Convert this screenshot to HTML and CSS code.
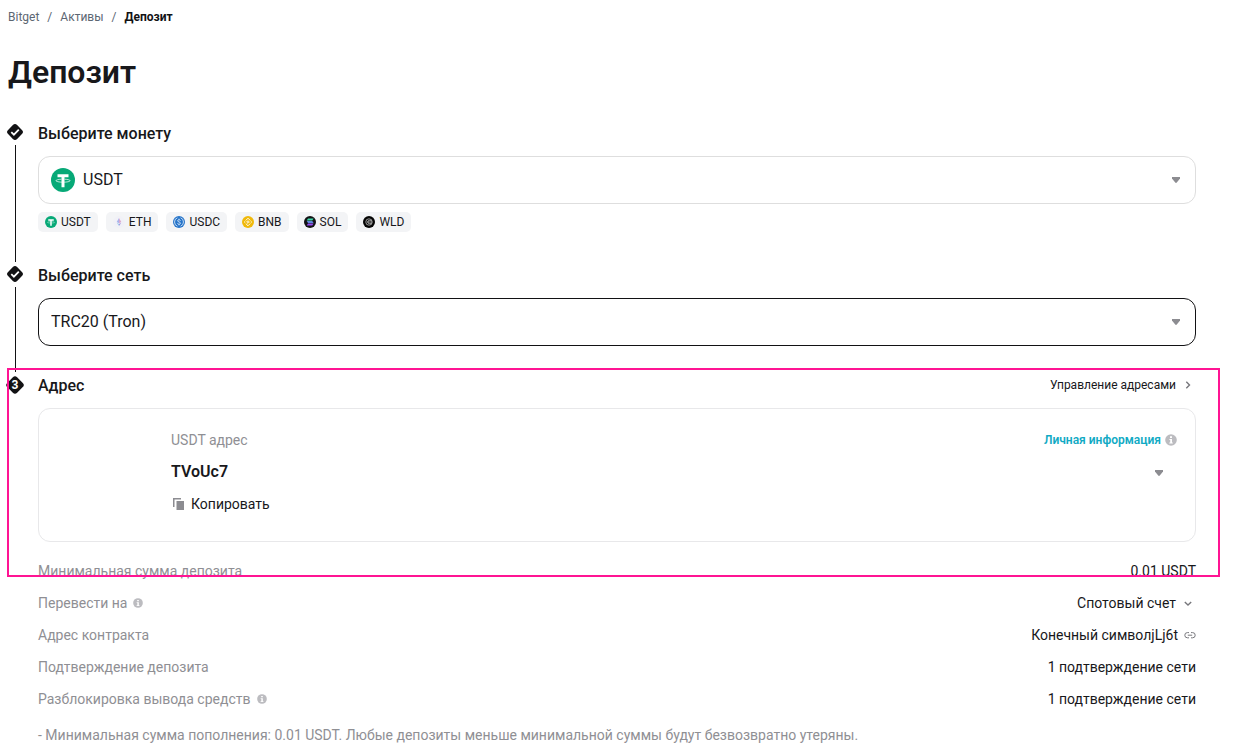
FILE: index.html
```
<!DOCTYPE html>
<html lang="ru">

<head>
    <meta charset="UTF-8">
    <meta name="viewport" content="width=device-width, initial-scale=1.0">
    <title>Депозит</title>
    <link rel="stylesheet" href="styles.css">
</head>

<body>
    <!-- shared icons -->
    <svg class="sprite" aria-hidden="true">
        <symbol id="done" viewBox="0 0 18 18">
            <rect x="2.6" y="2.6" width="12.8" height="12.8" rx="3" transform="rotate(45 9 9)" fill="#121214" />
            <path d="M5.3 9.2l2.6 2.5 4.9-5" fill="none" stroke="#fff" stroke-width="1.8" />
        </symbol>
        <symbol id="info" viewBox="0 0 12 12">
            <circle cx="6" cy="6" r="5.8" fill="#bcbcc0" />
            <path d="M5 2.3h2v1.6H5zM4.4 5H7v3.6h.8v1H4.3v-1h.9V6h-.8z" fill="#fff" />
        </symbol>
        <symbol id="caret" viewBox="0 0 8 6">
            <path d="M0 0h8v1.500L4.800 5.500q-.8.8-1.600 0L0 1.500z" />
        </symbol>
        <symbol id="usdt" viewBox="0 0 24 24">
            <circle cx="12" cy="12" r="12" fill="#07a977" />
            <path d="M6.500 6.300h11v3h-4v10h-3v-10h-4z" fill="#fff" />
            <path d="M10.500 11.200c-3.300.2-5.600.8-5.600 1.500s3.200 1.500 7.100 1.500 7.100-.7 7.100-1.500-2.300-1.300-5.600-1.500" fill="none" stroke="#fff" stroke-width=".7" />
        </symbol>
    </svg>

    <main class="page">
        <nav class="breadcrumb">
            <a href="#">Bitget</a>
            <span>/</span>
            <a href="#">Активы</a>
            <span>/</span>
            <b>Депозит</b>
        </nav>

        <h1>Депозит</h1>

        <!-- coin -->
        <section class="step step-coin">
            <div class="marker">
                <svg class="marker-icon"><use href="#done" /></svg>
                <div class="line"></div>
            </div>
            <div class="step-body">
                <div class="step-head">
                    <h2><label for="coin">Выберите монету</label></h2>
                </div>
                <div class="field">
                    <svg class="coin-icon"><use href="#usdt" /></svg>
                    <select id="coin" class="with-icon">
                        <option>USDT</option>
                        <option>ETH</option>
                        <option>USDC</option>
                    </select>
                    <svg class="caret"><use href="#caret" /></svg>
                </div>
                <div class="chips">
                    <button type="button"><svg viewBox="0 0 24 24"><use href="#usdt" /></svg>USDT</button>
                    <button type="button">
                        <svg viewBox="0 0 12 12">
                            <circle cx="6" cy="6" r="6" fill="#f1f1f7" />
                            <path d="M6 2L3.700 6 6 7.300z" fill="#a9b4ec" />
                            <path d="M6 2l2.300 4L6 7.300z" fill="#dba9cf" />
                            <path d="M3.800 6.800L6 10V8z" fill="#9fcbe8" />
                            <path d="M8.200 6.800L6 10V8z" fill="#9d93e0" />
                        </svg>ETH
                    </button>
                    <button type="button">
                        <svg viewBox="0 0 12 12">
                            <circle cx="6" cy="6" r="6" fill="#2775ca" />
                            <path d="M4.400 1.800a4.500 4.500 0 0 0 0 8.400M7.600 1.800a4.500 4.500 0 0 1 0 8.400M7.500 4.700C7.300 3.400 4.600 3.400 4.600 4.800S7.500 5.700 7.500 7.200 4.600 8.600 4.500 7.300M6 2.700v1M6 8.300v1" fill="none" stroke="#fff" stroke-width=".7" />
                        </svg>USDC
                    </button>
                    <button type="button">
                        <svg viewBox="0 0 12 12">
                            <circle cx="6" cy="6" r="6" fill="#f0b90b" />
                            <path d="M3.700 4.500L6 2.200l2.300 2.300M3.700 7.500L6 9.800l2.300-2.300M6 4.700L7.300 6 6 7.300 4.700 6z" fill="none" stroke="#fff" stroke-width=".9" />
                            <path d="M2.700 5.200l.8.8-.8.8-.8-.8zM9.300 5.200l.8.8-.8.8-.8-.8z" fill="#fff" />
                        </svg>BNB
                    </button>
                    <button type="button">
                        <svg viewBox="0 0 12 12">
                            <circle cx="6" cy="6" r="6" fill="#121214" />
                            <path d="M4 2.600h5.600L8.300 4.400H2.700z" fill="#3fd6a8" />
                            <path d="M2.700 5.100h5.600l1.300 1.800H4z" fill="#5f86dc" />
                            <path d="M4 7.600h5.600L8.300 9.400H2.700z" fill="#9a4cf5" />
                        </svg>SOL
                    </button>
                    <button type="button">
                        <svg viewBox="0 0 12 12">
                            <circle cx="6" cy="6" r="6" fill="#050505" />
                            <path d="M9.200 6A3.200 3.200 0 1 1 6 2.800 3.200 3.200 0 0 1 9.200 6M4.500 6h4.600M8.500 4.400H6.300a1.600 1.600 0 0 0 0 3.200h2.200" fill="none" stroke="#d5d5d5" stroke-width=".7" />
                        </svg>WLD
                    </button>
                </div>
            </div>
        </section>

        <!-- network -->
        <section class="step step-network">
            <div class="marker">
                <svg class="marker-icon"><use href="#done" /></svg>
                <div class="line"></div>
            </div>
            <div class="step-body">
                <div class="step-head">
                    <h2><label for="network">Выберите сеть</label></h2>
                </div>
                <div class="field active">
                    <select id="network">
                        <option>TRC20 (Tron)</option>
                    </select>
                    <svg class="caret"><use href="#caret" /></svg>
                </div>
            </div>
        </section>

        <!-- address -->
        <section class="step step-address">
            <div class="marker">
                <div class="number"><span>3</span></div>
            </div>
            <div class="step-body">
                <div class="step-head">
                    <h2><label for="address">Адрес</label></h2>
                    <a href="#" class="manage">Управление адресами
                        <svg viewBox="0 0 12 12"><path d="M4.300 2.800L7.500 6 4.300 9.200" /></svg>
                    </a>
                </div>
                <div class="card">
                    <div class="card-row">
                        <span class="muted">USDT адрес</span>
                        <a href="#" class="personal">Личная информация <svg><use href="#info" /></svg></a>
                    </div>
                    <div class="address">
                        <select id="address">
                            <option>TVoUc7</option>
                        </select>
                        <svg class="caret"><use href="#caret" /></svg>
                    </div>
                    <button type="button" class="copy">
                        <svg viewBox="0 0 12 12">
                            <path d="M0 0h8v1.500H1.500V9H0z" />
                            <path d="M3.500 3H11v9H3.500z" />
                        </svg>Копировать
                    </button>
                </div>
            </div>
            <div class="highlight"></div>
        </section>

        <!-- details -->
        <dl class="details">
            <div>
                <dt>Минимальная сумма депозита</dt>
                <dd>0.01 USDT</dd>
            </div>
            <div>
                <dt>Перевести на <svg class="info"><use href="#info" /></svg></dt>
                <dd>
                    <button type="button" class="account">Спотовый счет
                        <svg viewBox="0 0 12 12"><path d="M2.800 5L6 8l3.200-3" /></svg>
                    </button>
                </dd>
            </div>
            <div>
                <dt>Адрес контракта</dt>
                <dd>
                    <a href="#" class="contract">Конечный символjLj6t
                        <svg viewBox="0 0 12 12"><path d="M5 3.600H3.400a2.600 2.600 0 0 0 0 5.200H5M7 3.600h1.600a2.600 2.600 0 0 1 0 5.200H7M3.800 6.200h4.400" /></svg>
                    </a>
                </dd>
            </div>
            <div>
                <dt>Подтверждение депозита</dt>
                <dd>1 подтверждение сети</dd>
            </div>
            <div>
                <dt>Разблокировка вывода средств <svg class="info"><use href="#info" /></svg></dt>
                <dd>1 подтверждение сети</dd>
            </div>
        </dl>

        <p class="note">- Минимальная сумма пополнения: 0.01 USDT. Любые депозиты меньше минимальной суммы будут безвозвратно утеряны.</p>
    </main>
</body>

</html>
```
FILE: styles.css
```
* {
    box-sizing: border-box;
}

body {
    margin: 0;
    font-family: Roboto, "Liberation Sans", sans-serif;
    font-size: 14px;
    color: #18181b;
    background-color: #fff;
}

a {
    color: inherit;
    text-decoration: none;
}

button,
select {
    font: inherit;
    color: inherit;
    background: none;
    border: none;
    padding: 0;
    cursor: pointer;
}

.sprite {
    display: none;
}

.page {
    padding: 8px 47px 8px 6px;
}

/* breadcrumb and title */
.breadcrumb {
    display: flex;
    gap: 8px;
    padding-left: 2px;
    font-size: 12px;
    line-height: 18px;
    color: #5c6672;
}

.breadcrumb b {
    font-weight: 700;
    color: #121214;
}

h1 {
    margin: 26px 0 29px;
    padding-left: 2px;
    font-size: 32px;
    font-weight: 600;
    line-height: 40px;
}

h2 {
    margin: 0;
    font-size: 16px;
    font-weight: 500;
}

/* steps */
.step {
    display: flex;
    gap: 14px;
}

.step-coin .step-body {
    padding-bottom: 31px;
}

.step-network .step-body {
    padding-bottom: 27px;
}

.step-body {
    flex: 1;
}

.marker {
    width: 18px;
    display: flex;
    flex-direction: column;
    align-items: center;
    gap: 4px;
    padding-top: 2px;
}

.marker-icon {
    width: 18px;
    height: 18px;
    flex: none;
}

.line {
    flex: 1;
    width: 1px;
    margin-bottom: 1px;
    background-color: #121214;
}

.number {
    width: 14px;
    height: 14px;
    margin-top: 3px;
    border-radius: 3px;
    background-color: #121214;
    color: #fff;
    font-size: 12px;
    font-weight: 700;
    line-height: 14px;
    text-align: center;
    transform: rotate(45deg);
}

.number span {
    display: block;
    transform: rotate(-45deg);
}

.step-head {
    display: flex;
    justify-content: space-between;
    align-items: center;
    height: 24px;
    margin-bottom: 11px;
}

/* dropdowns */
.field {
    position: relative;
    height: 48px;
    border: 1px solid #dedede;
    border-radius: 12px;
}

.field.active {
    border-color: #121214;
}

.field select,
.address select {
    width: 100%;
    height: 100%;
    appearance: none;
}

.field select {
    padding: 0 40px 1px 12px;
    font-size: 16px;
}

.field .with-icon {
    padding-left: 44px;
}

.coin-icon {
    position: absolute;
    top: 11px;
    left: 12px;
    width: 24px;
    height: 24px;
    pointer-events: none;
}

.caret {
    position: absolute;
    top: 20px;
    right: 15px;
    width: 8px;
    height: 6px;
    fill: #8c8c91;
    pointer-events: none;
}

.chips {
    display: flex;
    gap: 8px;
    margin-top: 8px;
}

.chips button {
    display: flex;
    align-items: center;
    gap: 4px;
    height: 20px;
    padding: 0 7px;
    border-radius: 5px;
    background-color: #f3f4f6;
    font-size: 12px;
}

.chips svg {
    width: 12px;
    height: 12px;
}

/* address */
.step-address {
    position: relative;
}

.highlight {
    position: absolute;
    top: -5px;
    right: -24px;
    bottom: -35px;
    left: 1px;
    border: 2px solid #ff1493;
    pointer-events: none;
}

.manage {
    display: flex;
    align-items: center;
    gap: 6px;
    padding-right: 2px;
    font-size: 12px;
}

.manage svg,
.account svg,
.contract svg {
    width: 12px;
    height: 12px;
    fill: none;
    stroke: #77777c;
    stroke-width: 1.4;
}

.contract svg {
    stroke-width: 1;
}

.card {
    height: 134px;
    padding: 20px 18px 20px 132px;
    border: 1px solid #e8e8ea;
    border-radius: 12px;
}

.card-row {
    display: flex;
    justify-content: space-between;
    align-items: center;
    height: 22px;
}

.muted {
    color: #8f8f94;
}

.personal {
    display: flex;
    align-items: center;
    gap: 4px;
    font-size: 12px;
    font-weight: 600;
    color: #11aac4;
}

.personal svg {
    width: 12px;
    height: 12px;
}

.address {
    position: relative;
    height: 24px;
    margin: 8px 0 9px;
}

.address select {
    font-size: 16px;
    font-weight: 600;
}

.address .caret {
    top: 11px;
    right: 14px;
}

.copy {
    display: flex;
    align-items: center;
    gap: 6px;
    height: 24px;
    padding-left: 2px;
}

.copy svg {
    width: 12px;
    height: 12px;
    fill: #8c8c91;
}

/* details */
.details {
    display: flex;
    flex-direction: column;
    gap: 8px;
    margin: 17px 0 0;
    padding-left: 32px;
    line-height: 24px;
}

.details div {
    display: flex;
    justify-content: space-between;
}

.details dt {
    display: flex;
    align-items: center;
    gap: 6px;
    color: #8f8f94;
}

.details dd {
    margin: 0;
}

.info {
    width: 10px;
    height: 10px;
}

.account,
.contract {
    display: flex;
    align-items: center;
    gap: 6px;
}

.account {
    padding-right: 2px;
}

.note {
    margin: 12px 0 0;
    padding-left: 32px;
    line-height: 24px;
    color: #8f8f94;
}
```
